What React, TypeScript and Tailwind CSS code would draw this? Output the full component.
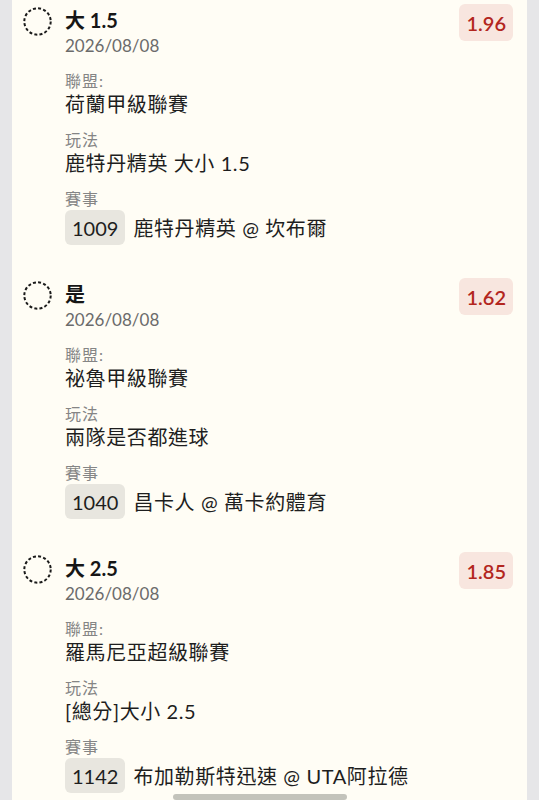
import React from 'react';

type Bet = {
  pick: string;
  date: string;
  league: string;
  market: string;
  eventNo: string;
  event: string;
  odds: string;
};

const BETS: Bet[] = [
  { pick: '大 1.5', date: '2026/08/08', league: '荷蘭甲級聯賽', market: '鹿特丹精英 大小 1.5', eventNo: '1009', event: '鹿特丹精英 @ 坎布爾', odds: '1.96' },
  { pick: '是', date: '2026/08/08', league: '祕魯甲級聯賽', market: '兩隊是否都進球', eventNo: '1040', event: '昌卡人 @ 萬卡約體育', odds: '1.62' },
  { pick: '大 2.5', date: '2026/08/08', league: '羅馬尼亞超級聯賽', market: '[總分]大小 2.5', eventNo: '1142', event: '布加勒斯特迅速 @ UTA阿拉德', odds: '1.85' },
];

const FONT = { fontFamily: 'Lato, "Noto Sans CJK TC", sans-serif' };

const DashedCircle = () => (
  <svg width="29" height="29" viewBox="0 0 29 29" className="mt-[3px] ml-[10px] mr-[13px] shrink-0">
    <circle cx="14.5" cy="14.5" r="13.2" fill="none" stroke="#1a1a1a" strokeWidth="2" strokeDasharray="3 2.2" />
  </svg>
);

const BetRow: React.FC<{ bet: Bet }> = ({ bet }) => (
  <div className="flex justify-between items-start pb-[33px]">
    <div className="flex items-start">
      <DashedCircle />
      <div className="flex flex-col pt-[2px]">
        <div className="text-[20px] leading-[28px] font-bold text-[#161616]">{bet.pick}</div>
        <div className="text-[17px] leading-[24px] text-[#6b6b6b]">{bet.date}</div>

        <div className="mt-[13px] text-[16px] leading-[20px] tracking-[1px] text-[#858585]">聯盟:</div>
        <div className="text-[20px] leading-[26px] tracking-[0.6px] text-[#1e1e1e]">{bet.league}</div>

        <div className="mt-[13px] text-[16px] leading-[20px] tracking-[1px] text-[#858585]">玩法</div>
        <div className="text-[20px] leading-[26px] tracking-[0.6px] text-[#1e1e1e]">{bet.market}</div>

        <div className="mt-[13px] text-[16px] leading-[20px] tracking-[1px] text-[#858585]">賽事</div>
        <div className="mt-[1px] flex items-center gap-2">
          <span className="h-[35px] px-[7px] flex items-center rounded-md bg-[#e8e6df] text-[20px] text-[#1e1e1e]">{bet.eventNo}</span>
          <span className="text-[20px] leading-[26px] tracking-[0.6px] text-[#1e1e1e]">{bet.event}</span>
        </div>
      </div>
    </div>
    <div className="h-[37px] px-[7px] flex items-center rounded-md bg-[#f8e6df] text-[20px] font-semibold text-[#b3261e]">
      {bet.odds}
    </div>
  </div>
);

export default function App() {
  return (
    <div className="relative h-[800px] overflow-hidden bg-[#e6e6e8] px-[12px]" style={FONT}>
      <div className="h-full bg-[#fffdf5] pt-[4px] pr-[14px] pl-[1px]">
        {BETS.map((b, i) => (
          <BetRow key={i} bet={b} />
        ))}
      </div>
      <div className="absolute bottom-0 left-[173px] w-[174px] h-[6px] rounded-full bg-[#a9a9a2]/70" />
    </div>
  );
}
